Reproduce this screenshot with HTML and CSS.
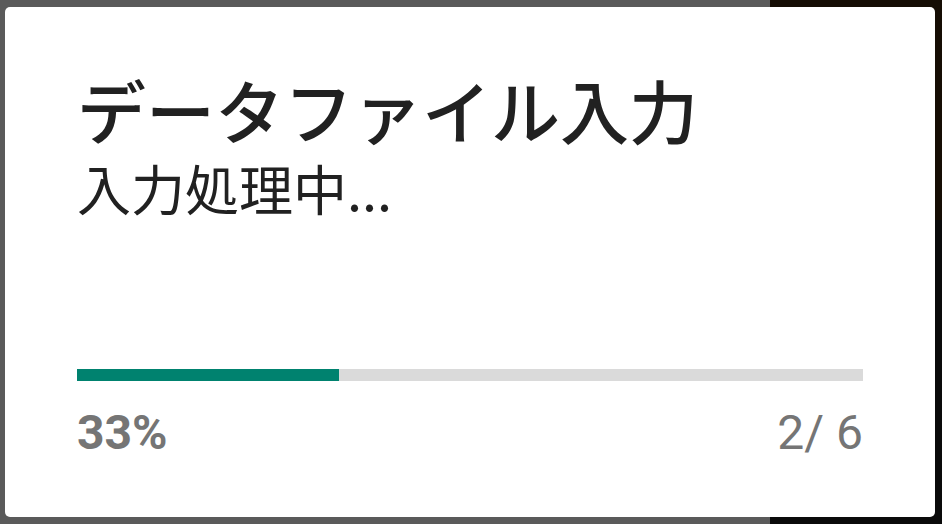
FILE: index.html
```html
<!DOCTYPE html>
<html lang="ja">
<head>
<meta charset="utf-8">
<link rel="stylesheet" href="styles.css">
</head>
<body>
<div class="backdrop">
  <div class="scrim-left"></div>
  <div class="scrim-right">
    <div class="strip-top"></div>
    <div class="strip-bottom"></div>
  </div>
</div>
<div class="dialog">
  <div class="head">
    <h1 class="title">データファイル入力</h1>
    <p class="message">入力処理中...</p>
  </div>
  <div class="progress">
    <div class="track"><div class="fill" style="width:33.33%"></div></div>
    <div class="labels">
      <span class="percent">33%</span>
      <span class="count">2/ 6</span>
    </div>
  </div>
</div>
</body>
</html>
```
FILE: styles.css
```css
html, body {
  margin: 0;
  padding: 0;
  width: 942px;
  height: 524px;
  overflow: hidden;
}
body {
  position: relative;
  font-family: Roboto, "Noto Sans CJK JP", sans-serif;
}
.backdrop {
  display: flex;
  width: 942px;
  height: 524px;
}
.scrim-left {
  width: 770px;
  background: #5a5a5a;
}
.scrim-right {
  flex: 1;
  display: flex;
  flex-direction: column;
}
.strip-top {
  height: 220px;
  background: #150d04;
}
.strip-bottom {
  flex: 1;
  background: #0a0a0a;
}
.dialog {
  position: absolute;
  left: 5px;
  top: 7px;
  width: 930px;
  height: 510px;
  box-sizing: border-box;
  background: #ffffff;
  border-radius: 5px;
  padding: 58px 72px 0 72px;
  display: flex;
  flex-direction: column;
}
.title {
  margin: 0;
  font-family: "Noto Sans CJK JP", sans-serif;
  font-weight: 500;
  font-size: 69px;
  line-height: 88px;
  color: #212121;
}
.message {
  margin: 0;
  font-family: "Noto Sans CJK JP", sans-serif;
  font-weight: 400;
  font-size: 54px;
  line-height: 70px;
  color: #212121;
}
.progress {
  margin-top: auto;
  padding-bottom: 56px;
}
.track {
  height: 12px;
  background: #dadada;
}
.fill {
  height: 100%;
  background: #00826f;
}
.labels {
  display: flex;
  justify-content: space-between;
  align-items: baseline;
  margin-top: 24px;
  font-size: 48px;
  line-height: 56px;
  color: #757575;
}
.percent {
  font-weight: 700;
}
.count {
  font-weight: 400;
}
```
